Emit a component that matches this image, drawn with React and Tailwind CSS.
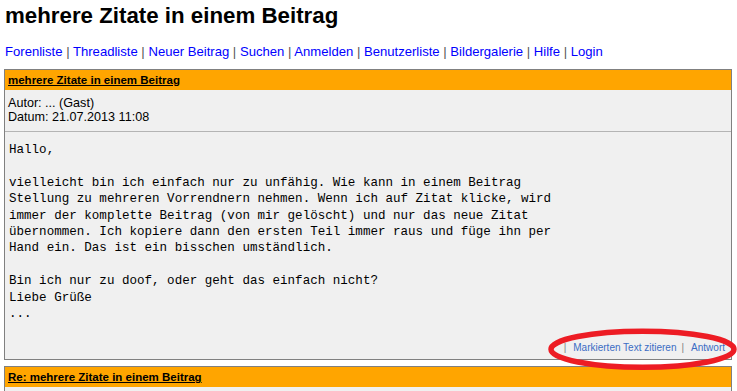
import React from "react";

const navItems = [
  "Forenliste",
  "Threadliste",
  "Neuer Beitrag",
  "Suchen",
  "Anmelden",
  "Benutzerliste",
  "Bildergalerie",
  "Hilfe",
  "Login",
];

const bodyText = `Hallo,

vielleicht bin ich einfach nur zu unfähig. Wie kann in einem Beitrag
Stellung zu mehreren Vorrendnern nehmen. Wenn ich auf Zitat klicke, wird
immer der komplette Beitrag (von mir gelöscht) und nur das neue Zitat
übernommen. Ich kopiere dann den ersten Teil immer raus und füge ihn per
Hand ein. Das ist ein bisschen umständlich.

Bin ich nur zu doof, oder geht das einfach nicht?
Liebe Grüße
...`;

export default function App() {
  return (
    <div className="relative w-[737px] h-[391px] overflow-hidden bg-white text-black font-['Liberation_Sans',Arial,sans-serif]">
      <h1 className="pl-[5px] pt-[3px] text-[22.3px] leading-[26px] font-bold">
        mehrere Zitate in einem Beitrag
      </h1>

      <nav className="mt-[15px] pl-[5px] text-[13.1px] leading-[15px] whitespace-nowrap">
        {navItems.map((item, i) => (
          <React.Fragment key={item}>
            {i > 0 && <span className="text-[#555555]"> | </span>}
            <a href="#" className="text-[#0000ff]">
              {item}
            </a>
          </React.Fragment>
        ))}
      </nav>

      <div className="mt-[10px] ml-[4px] mr-[5px] border border-[#808080] bg-[#f0f0f0]">
        <div className="h-[20px] bg-[#ffa500] pl-[3px] text-[11.5px] leading-[20px] font-bold">
          <a href="#" className="underline text-black">
            mehrere Zitate in einem Beitrag
          </a>
        </div>
        <div className="pl-[3px] pt-[6px] pb-[7px] text-[12.6px] leading-[14px] border-b border-[#b4b4b4]">
          <div>Autor: ... (Gast)</div>
          <div>Datum: 21.07.2013 11:08</div>
        </div>
        <pre className="pl-[4px] pt-[10px] pb-[20px] font-['Liberation_Mono','Courier_New',monospace] text-[12.55px] leading-[16.4px] whitespace-pre">
          {bodyText}
        </pre>
        <div className="flex justify-end items-center pr-[6px] pb-[5px] text-[10px] leading-[12px]">
          <span className="text-[#808080]">|</span>
          <a href="#" className="ml-[7px] text-[#3b6cc4]">
            Markierten Text zitieren
          </a>
          <span className="ml-[5px] text-[#808080]">|</span>
          <a href="#" className="ml-[7px] text-[#3b6cc4]">
            Antwort
          </a>
        </div>
      </div>

      <div className="mt-[6px] ml-[4px] mr-[5px] border border-[#808080] bg-[#f0f0f0] h-[60px]">
        <div className="h-[20px] bg-[#ffa500] pl-[3px] text-[11.5px] leading-[20px] font-bold">
          <a href="#" className="underline text-black">
            Re: mehrere Zitate in einem Beitrag
          </a>
        </div>
      </div>

      <svg
        className="absolute left-0 top-0 pointer-events-none"
        width="737"
        height="391"
        viewBox="0 0 737 391"
      >
        <ellipse
          cx="642.5"
          cy="349.3"
          rx="91.5"
          ry="18"
          fill="none"
          stroke="#ed1c24"
          strokeWidth="5.5"
        />
      </svg>
    </div>
  );
}
